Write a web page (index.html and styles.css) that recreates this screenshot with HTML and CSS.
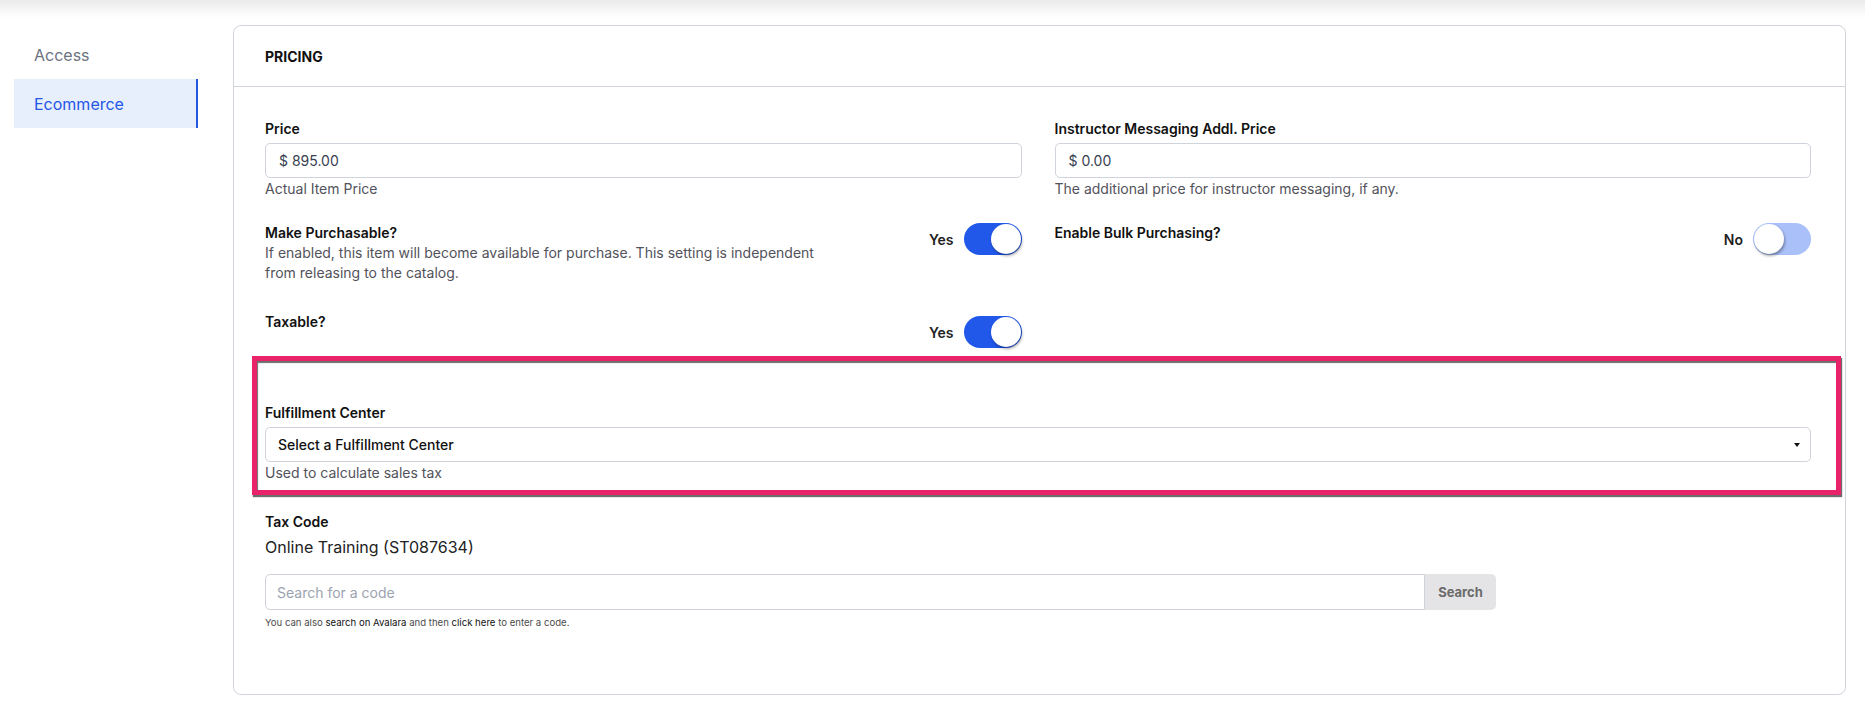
FILE: index.html
```html
<!DOCTYPE html>
<html lang="en">
<head>
<meta charset="utf-8">
<title>Ecommerce - Pricing</title>
<link rel="stylesheet" href="styles.css">
</head>
<body>
<div class="topshadow"></div>
<div class="page">
  <nav class="sidebar">
    <a class="nav-item">Access</a>
    <a class="nav-item active">Ecommerce</a>
  </nav>
  <main class="card">
    <header class="card-header">PRICING</header>
    <div class="card-body">
      <div class="grid">
        <div class="field">
          <label class="label">Price</label>
          <div class="input">$ 895.00</div>
          <div class="help">Actual Item Price</div>
        </div>
        <div class="field">
          <label class="label">Instructor Messaging Addl. Price</label>
          <div class="input">$ 0.00</div>
          <div class="help">The additional price for instructor messaging, if any.</div>
        </div>

        <div class="toggle-row">
          <div class="toggle-text">
            <div class="label">Make Purchasable?</div>
            <div class="help">If enabled, this item will become available for purchase. This setting is independent from releasing to the catalog.</div>
          </div>
          <div class="toggle-ctl">
            <span class="toggle-word">Yes</span>
            <span class="switch on"><span class="knob"></span></span>
          </div>
        </div>
        <div class="toggle-row">
          <div class="toggle-text">
            <div class="label">Enable Bulk Purchasing?</div>
          </div>
          <div class="toggle-ctl">
            <span class="toggle-word">No</span>
            <span class="switch off"><span class="knob"></span></span>
          </div>
        </div>

        <div class="toggle-row taxable">
          <div class="toggle-text">
            <div class="label">Taxable?</div>
          </div>
          <div class="toggle-ctl">
            <span class="toggle-word">Yes</span>
            <span class="switch on"><span class="knob"></span></span>
          </div>
        </div>
      </div>

      <section class="highlight">
        <label class="label">Fulfillment Center</label>
        <div class="select">
          <span>Select a Fulfillment Center</span>
          <span class="caret"></span>
        </div>
        <div class="help">Used to calculate sales tax</div>
      </section>

      <section class="taxcode">
        <label class="label">Tax Code</label>
        <div class="taxvalue">Online Training (ST087634)</div>
        <div class="search-group">
          <div class="search-input">Search for a code</div>
          <button class="search-btn">Search</button>
        </div>
        <div class="tiny">You can also <a>search on Avalara</a> and then <a>click here</a> to enter a code.</div>
      </section>
    </div>
  </main>
</div>
</body>
</html>
```

FILE: styles.css
```css
* { box-sizing: border-box; }
html, body { margin: 0; padding: 0; background: #fff; }
body {
  font-family: Inter, "Noto Sans", "Liberation Sans", sans-serif;
  color: #111;
  width: 1865px;
  height: 710px;
  overflow: hidden;
  position: relative;
}
.topshadow {
  position: absolute;
  left: 0; top: 0; right: 0;
  height: 18px;
  background: linear-gradient(#ebebeb, rgba(255,255,255,0));
  pointer-events: none;
}
.page {
  display: flex;
  gap: 35px;
  padding: 25px 19px 0 14px;
}
.sidebar {
  width: 184px;
  flex: none;
  padding-top: 5px;
  display: flex;
  flex-direction: column;
}
.nav-item {
  display: flex;
  align-items: center;
  height: 49px;
  padding-left: 20px;
  font-size: 16px;
  color: #6b7280;
}
.nav-item.active {
  background: #e7eefc;
  color: #2457e6;
  border-right: 2px solid #2457e6;
}
.card {
  flex: 1;
  border: 1px solid #d1d5db;
  border-radius: 8px;
  height: 670px;
}
.card-header {
  height: 61px;
  border-bottom: 1px solid #d1d5db;
  padding-left: 31px;
  display: flex;
  align-items: center;
  font-size: 14px;
  font-weight: 700;
  color: #111;
}
.card-body {
  padding: 32px 34px 0 31px;
}
.grid {
  display: grid;
  grid-template-columns: 1fr 1fr;
  column-gap: 33px;
}
.label {
  display: block;
  font-size: 14px;
  font-weight: 600;
  line-height: 20px;
  color: #111;
}
.help {
  font-size: 14px;
  line-height: 20px;
  color: #52525b;
}
.input {
  margin-top: 4px;
  height: 35px;
  border: 1px solid #cfd4dc;
  border-radius: 5px;
  padding: 0 13px;
  display: flex;
  align-items: center;
  font-size: 14px;
  color: #374151;
}
.field .help { margin-top: 1px; }
.toggle-row {
  display: flex;
  justify-content: space-between;
  align-items: flex-start;
  margin-top: 24px;
}
.toggle-text { max-width: 562px; }
.toggle-row.taxable { margin-top: 29px; }
.toggle-row.taxable .toggle-ctl { margin-top: 4px; }
.toggle-ctl {
  display: flex;
  align-items: center;
  gap: 10px;
  flex: none;
}
.toggle-word {
  font-size: 14px;
  font-weight: 600;
  color: #222;
}
.switch {
  position: relative;
  width: 58px;
  height: 32px;
  border-radius: 16px;
  display: block;
}
.switch.on { background: #2158ea; }
.switch.off { background: #a9c0f8; }
.knob {
  position: absolute;
  top: 1px;
  width: 30px;
  height: 30px;
  border-radius: 50%;
  background: #fff;
  box-shadow: 1px 2px 3px rgba(0,0,0,0.35);
}
.switch.on .knob { right: 1px; }
.switch.off .knob { left: 1px; }

.highlight {
  margin: 8px -30px 0 -13px;
  border: 5px solid #e8236a;
  padding: 42px 25px 7px 8px;
  box-shadow: 1px 2px 1px rgba(60,60,60,0.75), inset 1px 2px 1px rgba(60,60,60,0.75);
}
.select {
  margin-top: 4px;
  height: 35px;
  border: 1px solid #cfd4dc;
  border-radius: 5px;
  padding: 0 10px 0 12px;
  display: flex;
  align-items: center;
  justify-content: space-between;
  font-size: 14px;
  font-weight: 500;
  color: #111;
}
.caret {
  width: 0; height: 0;
  border-left: 3px solid transparent;
  border-right: 3px solid transparent;
  border-top: 4px solid #111;
}
.highlight .help { margin-top: 1px; }

.taxcode { padding-top: 17px; }
.taxvalue {
  font-size: 16px;
  line-height: 24px;
  margin-top: 3px;
  color: #222;
}
.search-group {
  display: flex;
  width: 1231px;
  margin-top: 15px;
  height: 36px;
}
.search-input {
  flex: 1;
  border: 1px solid #cfd4dc;
  border-radius: 5px 0 0 5px;
  display: flex;
  align-items: center;
  padding-left: 11px;
  font-size: 14px;
  color: #9ca3af;
}
.search-btn {
  width: 71px;
  border: none;
  background: #e4e4e7;
  border-radius: 0 5px 5px 0;
  font-family: inherit;
  font-size: 13px;
  font-weight: 700;
  color: #6b6b6b;
  padding: 0;
}
.tiny {
  margin-top: 6px;
  font-size: 9.6px;
  line-height: 14px;
  color: #4b4b4b;
}
.tiny a { color: #111; }
```
